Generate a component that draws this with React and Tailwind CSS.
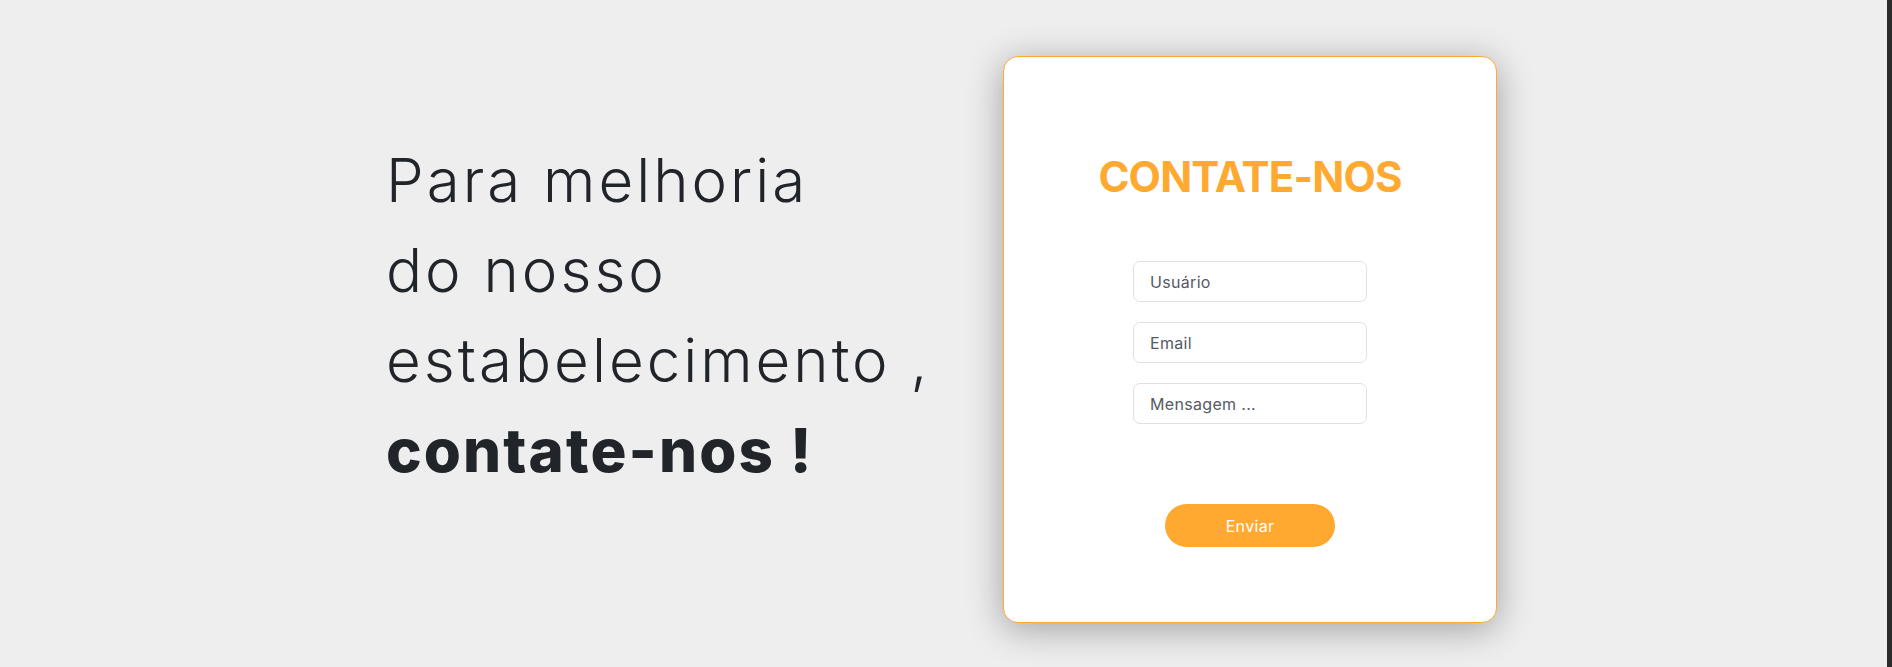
import React from 'react';

const Field = ({ placeholder }) => (
  <input
    type="text"
    placeholder={placeholder}
    className="w-[234px] h-[41px] rounded-[7px] border border-[#dfe1e5] bg-white px-4 text-[16px] tracking-[0.02em] text-[#212529] placeholder:text-[#555a64] outline-none"
  />
);

const App = () => {
  return (
    <div className="flex h-[667px] w-full overflow-hidden font-['Inter','Liberation_Sans',sans-serif]">
      <main className="flex flex-1 items-start bg-[#eeeeee] pl-[386px] pt-[56px]">
        {/* Left text */}
        <div className="w-[617px] mt-[79px] text-[60px] leading-[90px] text-[#212529]">
          <p className="font-light tracking-[0.05em]">Para melhoria</p>
          <p className="font-light tracking-[0.05em]">do nosso</p>
          <p className="font-light tracking-[0.05em]">estabelecimento ,</p>
          <p className="font-extrabold tracking-[0.035em]">contate-nos !</p>
        </div>

        {/* Contact card */}
        <div className="flex w-[494px] h-[567px] flex-col items-center rounded-[15px] border border-[#ffa931] bg-white pt-[99px] shadow-[0_6px_36px_rgba(0,0,0,0.33)]">
          <h1 className="text-[42px] leading-none font-bold tracking-[-0.02em] text-[#ffa931]">CONTATE-NOS</h1>
          <form className="mt-[63px] flex flex-col items-center gap-5">
            <Field placeholder="Usuário" />
            <Field placeholder="Email" />
            <Field placeholder="Mensagem ..." />
            <button
              type="button"
              className="mt-[60px] h-[43px] w-[170px] rounded-full bg-[#ffa931] text-[16px] tracking-[0.02em] text-white"
            >
              Enviar
            </button>
          </form>
        </div>
      </main>
      <div className="w-[5px] bg-[#2b2b2b]" />
    </div>
  );
};

export default App;
